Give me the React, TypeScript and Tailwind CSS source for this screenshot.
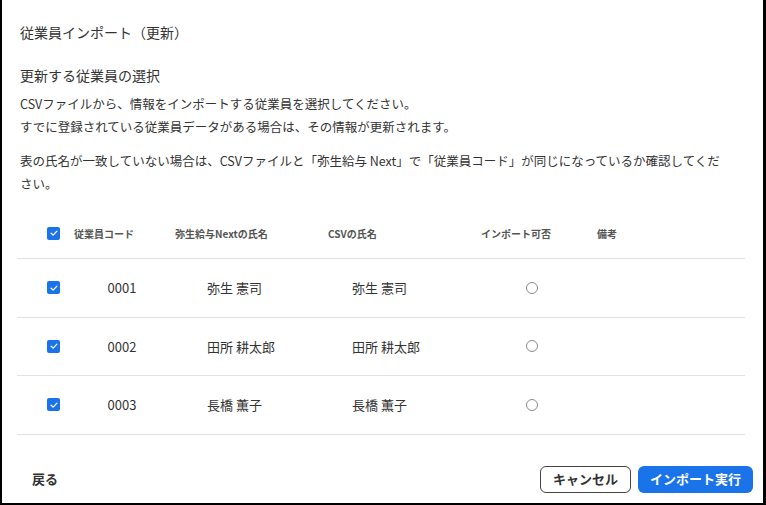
const font = { fontFamily: '"Noto Sans CJK JP", "Noto Sans", sans-serif' };

const employees = [
  { code: "0001", name: "弥生 憲司", csvName: "弥生 憲司" },
  { code: "0002", name: "田所 耕太郎", csvName: "田所 耕太郎" },
  { code: "0003", name: "長橋 薫子", csvName: "長橋 薫子" },
];

function Checkbox() {
  return (
    <span className="flex h-[13px] w-[13px] items-center justify-center rounded-[2px] bg-[#1a73e8]">
      <svg viewBox="0 0 12 12" className="h-[10px] w-[10px]" fill="none">
        <path d="M2.5 6.2 5 8.5 9.5 3.8" stroke="white" strokeWidth="1.5" strokeLinecap="round" strokeLinejoin="round" />
      </svg>
    </span>
  );
}

export default function App() {
  return (
    <div
      style={font}
      className="flex h-[505px] w-[766px] flex-col border-b-2 border-l-2 border-r-[3px] border-black bg-white text-[#333]"
    >
      <div className="pl-[15px] pr-[18px] pt-[22px]">
        <div className="pl-[3px]">
          <h1 className="h-[20px] text-[14px] leading-[20px]">従業員インポート（更新）</h1>
          <h2 className="mt-[23px] h-[20px] text-[14px] leading-[20px]">更新する従業員の選択</h2>
          <p className="mt-[7px] text-[12.5px] leading-[23px]">
            CSVファイルから、情報をインポートする従業員を選択してください。
            <br />
            すでに登録されている従業員データがある場合は、その情報が更新されます。
          </p>
          <p className="mt-[11px] text-[12.5px] leading-[23px]">
            表の氏名が一致していない場合は、CSVファイルと「弥生給与 Next」で「従業員コード」が同じになっているか確認してくだ
            <br />
            さい。
          </p>
        </div>

        <div className="mt-[13px]">
          <div className="grid h-[51px] grid-cols-[57px_101px_153px_153px_116px_1fr] items-center border-b border-[#e2e2e2] text-[10px] font-bold text-[#555]">
            <div className="pl-[30px]">
              <Checkbox />
            </div>
            <div>従業員コード</div>
            <div>弥生給与Nextの氏名</div>
            <div>CSVの氏名</div>
            <div>インポート可否</div>
            <div>備考</div>
          </div>
          {employees.map((employee) => (
            <div
              key={employee.code}
              className="grid h-[58.5px] grid-cols-[57px_96px_126px_164px_144px_1fr] items-center border-b border-[#e2e2e2] text-[13px]"
            >
              <div className="pl-[30px]">
                <Checkbox />
              </div>
              <div className="text-center">{employee.code}</div>
              <div className="pl-[37px]">{employee.name}</div>
              <div className="pl-[56px]">{employee.csvName}</div>
              <div className="flex justify-center">
                <span className="h-[12px] w-[12px] rounded-full border border-[#8a8a8a]" />
              </div>
              <div />
            </div>
          ))}
        </div>
      </div>

      <div className="mt-auto flex h-[48px] items-center justify-between pl-[30px] pr-[10px]">
        <button className="text-[13px] font-bold text-[#333]">戻る</button>
        <div className="flex gap-[7px]">
          <button className="h-[27px] w-[91px] rounded-[6px] border border-[#444] bg-white text-[13px] font-bold text-[#333]">
            キャンセル
          </button>
          <button className="h-[27px] w-[115px] rounded-[6px] bg-[#1a73e8] text-[13px] font-bold text-white">
            インポート実行
          </button>
        </div>
      </div>
    </div>
  );
}
